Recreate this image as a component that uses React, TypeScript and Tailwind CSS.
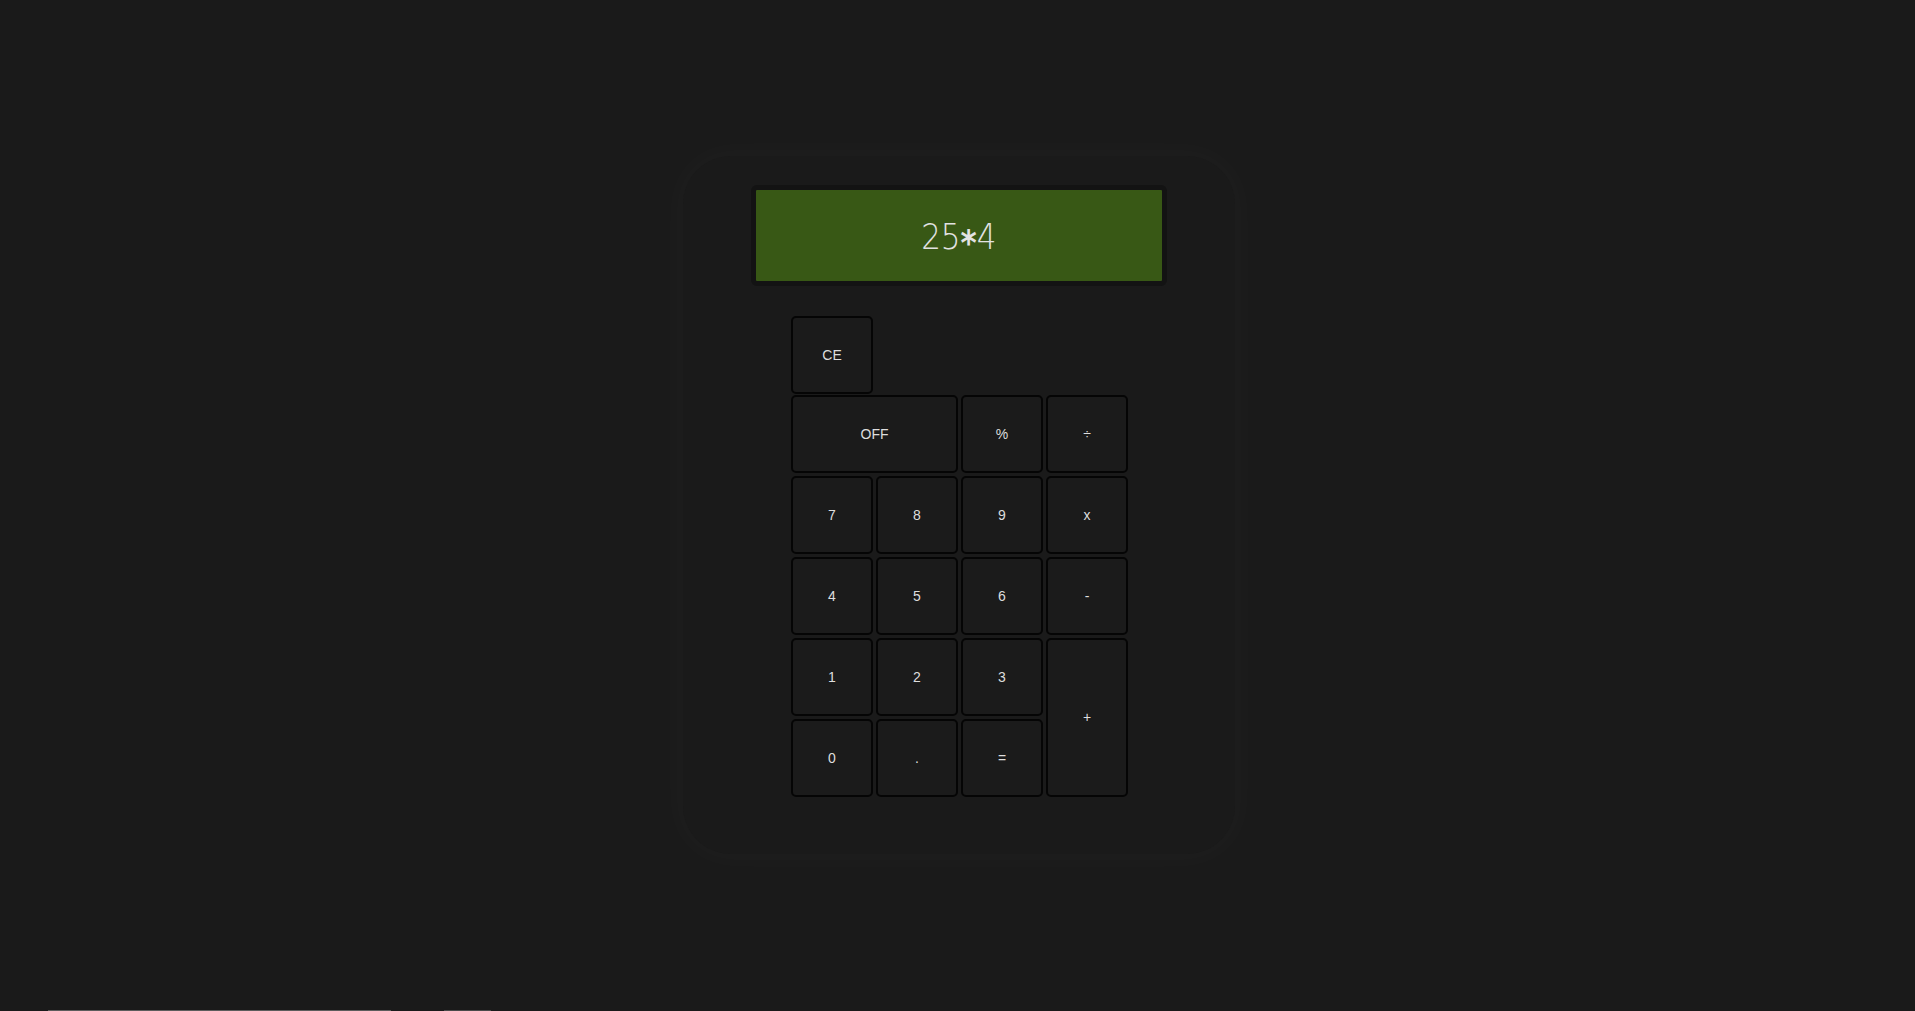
import React from 'react';

const keys: { label: string; span?: string }[] = [
  { label: 'OFF', span: 'col-span-2' },
  { label: '%' },
  { label: '÷' },
  { label: '7' },
  { label: '8' },
  { label: '9' },
  { label: 'x' },
  { label: '4' },
  { label: '5' },
  { label: '6' },
  { label: '-' },
  { label: '1' },
  { label: '2' },
  { label: '3' },
  { label: '+', span: 'row-span-2' },
  { label: '0' },
  { label: '.' },
  { label: '=' },
];

const Key = ({ label, span = '' }: { label: string; span?: string }) => (
  <button
    className={`${span} flex items-center justify-center rounded-[5px] border-2 border-[#050505] bg-[#1b1b1b] text-[14px] text-[#dedede]`}
  >
    {label}
  </button>
);

const App = () => {
  return (
    <div
      className="flex h-screen w-full flex-col bg-[#1a1a1a]"
      style={{ fontFamily: '"Liberation Sans", Arial, sans-serif' }}
    >
      <div className="flex flex-1 items-center justify-center">
        <div className="ml-[3px] h-[698px] w-[552px] rounded-[48px] bg-[#1a1a1a] pt-[29px] shadow-[0_0_30px_6px_rgba(255,255,255,0.025)]">
          <div className="mx-auto flex h-[101px] w-[416px] items-center justify-center rounded-[6px] border-[5px] border-[#131313] bg-[#385815]">
            <span
              className="flex scale-x-86 items-start pt-[2px] text-[36px] font-extralight leading-none text-[#e2e2e2]"
              style={{ fontFamily: '"DejaVu Sans", sans-serif' }}
            >
              25
              <span className="translate-y-[6px] font-bold">*</span>
              4
            </span>
          </div>

          <div className="ml-[108px] mt-[30px] w-[337px]">
            <div className="grid grid-cols-[repeat(4,82px)] gap-[3px]">
              <div className="h-[78px]">
                <Key label="CE" span="h-full w-full" />
              </div>
            </div>
            <div className="mt-[1px] grid grid-cols-[repeat(4,82px)] grid-rows-[repeat(5,78px)] gap-[3px]">
              {keys.map((k) => (
                <Key key={k.label} label={k.label} span={k.span} />
              ))}
            </div>
          </div>
        </div>
      </div>
      <div className="flex h-[1px] shrink-0">
        <div className="ml-[48px] w-[343px] bg-[#5c5c5c]" />
        <div className="ml-[53px] w-[47px] bg-[#4a4a4a]" />
      </div>
    </div>
  );
};

export default App;
